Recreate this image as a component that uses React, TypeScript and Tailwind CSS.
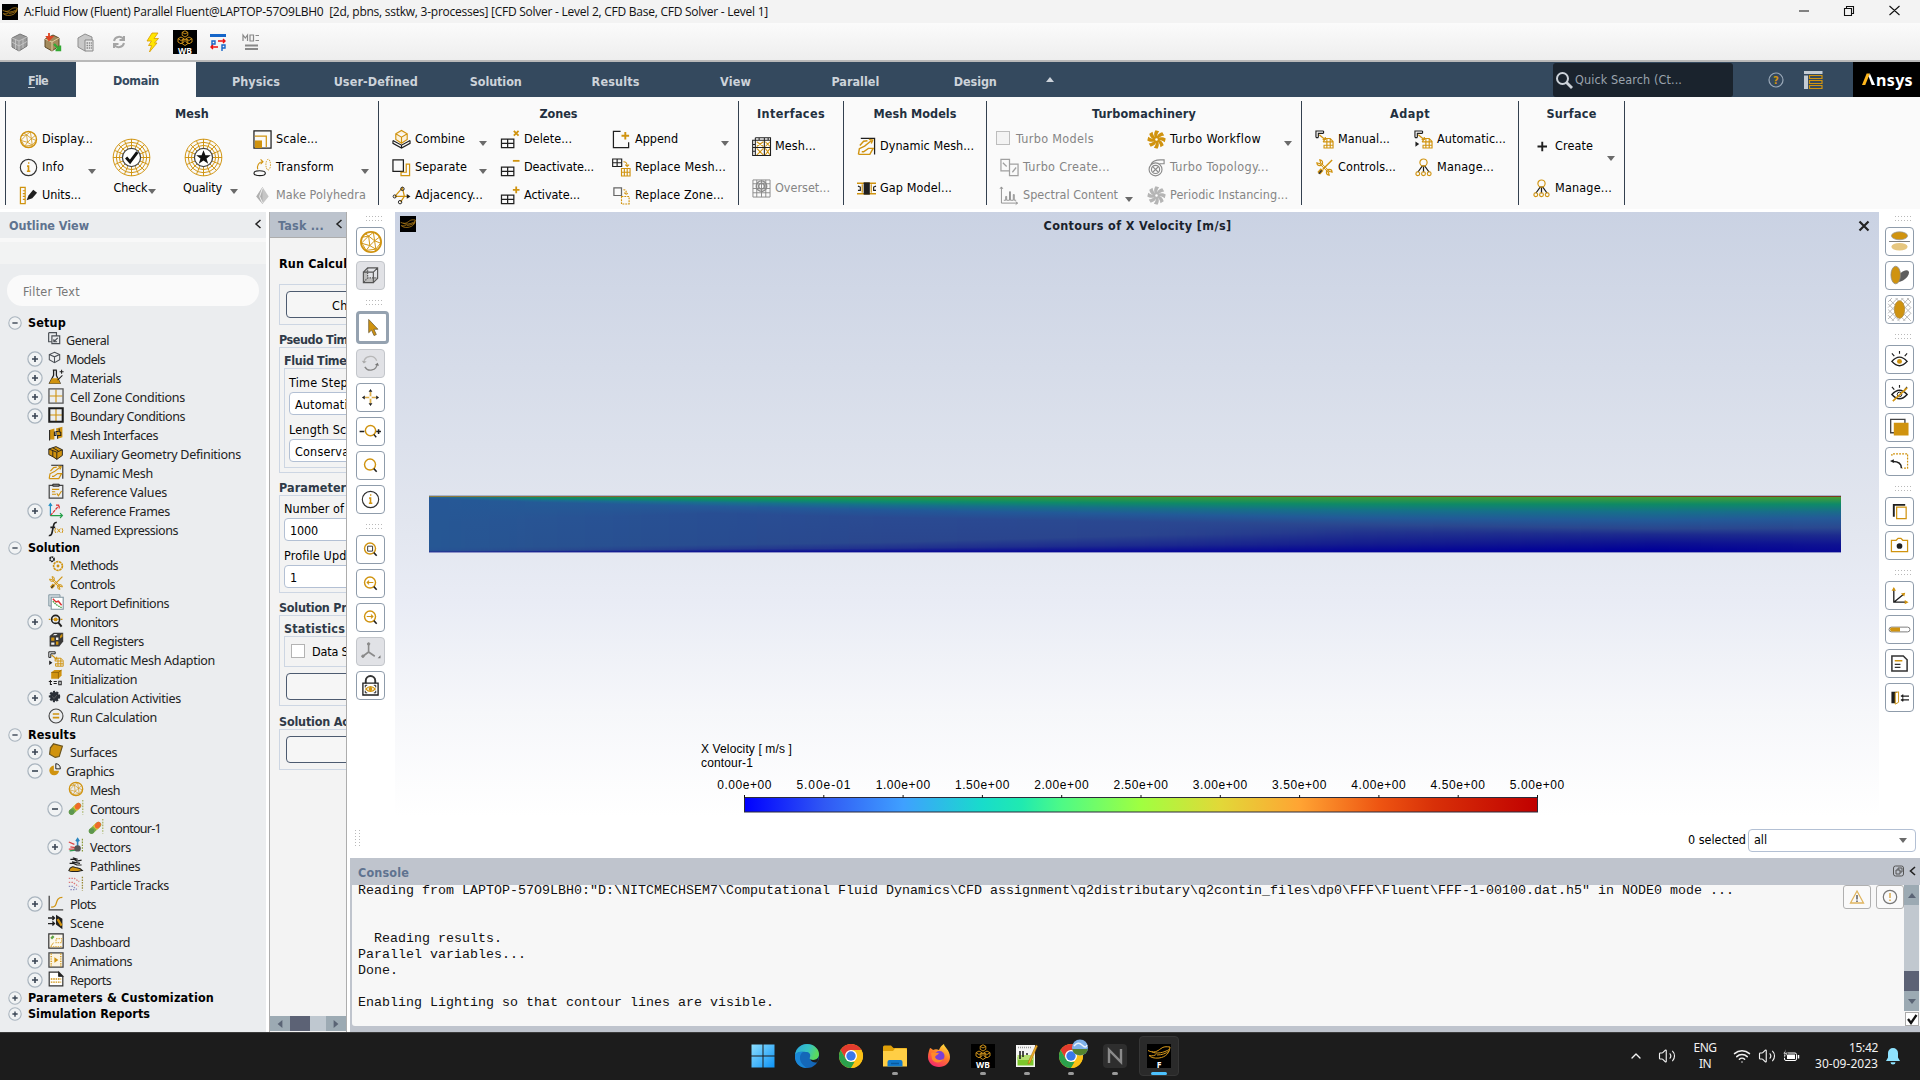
import React, { useLayoutEffect, useRef } from "react";
import { Wifi, Volume2, ChevronUp } from "lucide-react";

const G = "#d0930f";
const K = "#1f1f1f";
const M = "#8a8a8a";

/* Text whose tracking is adjusted so that it occupies a given width. */
function T({ w, c = "", children }: { w?: number; c?: string; children: React.ReactNode }) {
  const ref = useRef<HTMLSpanElement>(null);
  useLayoutEffect(() => {
    const el = ref.current;
    if (!el || !w) return;
    el.style.letterSpacing = "0px";
    const n = (el.textContent || "").length;
    const natural = el.getBoundingClientRect().width;
    el.style.letterSpacing = (w - natural) / n + "px";
  }, [w]);
  return (
    <span ref={ref} className={"inline-block shrink-0 whitespace-pre " + c}>
      {children}
    </span>
  );
}

const sphere = (
  <g fill="none" stroke={G}>
    <circle cx="10" cy="10" r="8.4" strokeWidth="1.5" />
    <path strokeWidth=".8" d="M3 6l5-1 4-3M8 5l5 4 4-3M2 11l6-6 1 8zM9 13l4-4 1 7zM9 13l-3 4M13 9l5 2-4 5M3 12l3 5 8-1M8 5L5 3M12 2l1 7" />
  </g>
);
const web = (center: React.ReactNode) => (
  <g>
    <g fill="none" stroke={G} strokeWidth="1">
      <circle cx="20" cy="20" r="18.8" />
      <circle cx="20" cy="20" r="15.6" />
      <circle cx="20" cy="20" r="12.4" />
      <path d="M20 1v38M1 20h38M6.6 6.6l26.8 26.8M33.4 6.6L6.6 33.4M12.7 2.6l14.6 34.8M27.3 2.6L12.7 37.4M2.6 12.7l34.8 14.6M2.6 27.3l34.8-14.6" />
    </g>
    <circle cx="20" cy="20" r="9.3" fill="#fff" stroke="#444" strokeWidth="1.3" />
    {center}
  </g>
);
const windowGrid = (
  <path d="M.5 9.5h13v9H.5zM7 9.5v9M.5 14h13" fill="none" stroke={K} strokeWidth="1.3" />
);
const fan = (f: string) => (
  <g fill={f}>
    {[0, 45, 90, 135, 180, 225, 270, 315].map((a) => (
      <path key={a} transform={`rotate(${a} 10 10)`} d="M9.5 10C7 7 7 3 9 .3l3.8 1C10.5 4 10.5 7 10.5 10z" />
    ))}
    <circle cx="10" cy="10" r="1.3" fill="#fff" />
  </g>
);
const lens = (inner?: React.ReactNode) => (
  <g>
    <circle cx="9.5" cy="9" r="5.8" fill="none" stroke={G} strokeWidth="1.5" />
    <path d="M13.5 13.3l3 3.2" stroke={K} strokeWidth="1.6" />
    {inner}
  </g>
);
const manage = (
  <g fill="none">
    <path d="M9 8L4 15M10 8v7M11 8l5 7" stroke={K} strokeWidth="1.3" />
    <g stroke={G} strokeWidth="1.2">
      <circle cx="10" cy="4.8" r="3.8" />
      <circle cx="4" cy="16.5" r="2" />
      <circle cx="10" cy="16.5" r="2" />
      <circle cx="16" cy="16.5" r="2" />
    </g>
  </g>
);
const adapt = (
  <g fill="none">
    <path d="M1 8V1h8M3.5 8V3.5H9M9 1v2.5M1 8h2.5" stroke={K} strokeWidth="1.2" />
    <path d="M4.5 5l6 5M8 10h2.8V7.3" stroke={G} strokeWidth="1.3" />
    <path d="M8.5 12.5L11 9h5l3 3v7h-9.5v-3M8.5 12.5h10M9 16h10M12.5 9v10M16 9v10" stroke={G} strokeWidth="1.2" />
  </g>
);
const tools = (
  <g fill="none" stroke={G}>
    <path d="M6 6l9 9" strokeWidth="2.4" />
    <path d="M6 6l9 9" strokeWidth=".9" stroke="#fff" />
    <path d="M18 2L8 12" strokeWidth="1.5" />
    <path d="M7.5 12L4 16" strokeWidth="4" />
    <path d="M7 13l-3 3.5" strokeWidth="1.5" stroke="#333" />
    <path d="M2 5a3 3 0 1 0 3-3L6 5 5 6zM18 15a3 3 0 1 0-3 3l-1-3 1-1z" strokeWidth="1.2" />
  </g>
);
const dyn = (
  <g fill="none">
    <path d="M4 1.5h14.5v17" stroke={K} strokeWidth="1.3" />
    <path d="M1.5 18.3l1-6L8 9.5l7-5.5M1.5 18.3h12l3.5-6.3h-5l-5 3.5H5M3 9l4-4.5 4-.5M12.5 2.5l4 .8-1.5 3.5" stroke={G} strokeWidth="1.5" />
  </g>
);
const contour = (
  <g>
    <path d="M4.500 15L13 7" stroke="#7fae45" strokeWidth="7" strokeLinecap="round" />
    <path d="M8.500 11.200L12 8" stroke="#e3cf3b" strokeWidth="7" />
    <path d="M11.500 8.500L13 7" stroke="#ee6a2b" strokeWidth="6.500" strokeLinecap="round" />
    <circle cx="4.500" cy="15" r="3.400" fill="#5d9650" />
    <path d="M18.5 0v18" stroke="#9aa84a" strokeWidth="1.3" strokeDasharray="2 1.5" />
  </g>
);

const icons: Record<string, React.ReactNode> = {
  sphere,
  info: (
    <g fill="none">
      <circle cx="10" cy="10" r="8.6" stroke="#333" strokeWidth="1.2" />
      <path d="M8.5 8.5H10V14M8.3 14h3.6M9.5 5.2h1.4" stroke={G} strokeWidth="1.7" />
    </g>
  ),
  units: (
    <g>
      <path d="M1.5 1.5h5v17h-5zM4 5h2.5M4 8h2.5M4 11h2.5M4 14h2.5" fill="none" stroke={G} strokeWidth="1.3" />
      <path d="M8 15l2-5 5-6 4 3-5 6z" fill={K} />
    </g>
  ),
  scale: (
    <g>
      <path d="M1 1h18v18H1z" fill="none" stroke={K} strokeWidth="1.3" />
      <path d="M2 6.5h12V18" fill="none" stroke={G} strokeWidth="1.3" />
      <path d="M2 11h7.5v8H2z" fill={G} />
    </g>
  ),
  transform: (
    <g fill="none">
      <ellipse cx="7" cy="16" rx="6" ry="2.6" stroke={K} strokeWidth="1.2" />
      <path d="M5 12C4 8 6 4 10 4M8 1.5L10.5 4 8 6.5" stroke={G} strokeWidth="1.2" />
      <ellipse cx="16" cy="7" rx="2.4" ry="5.6" stroke={G} strokeDasharray="1.5 1" />
    </g>
  ),
  poly: (
    <g>
      <path d="M10 1l6.500 10L10 19 3.500 11z" fill="#c6c6c6" />
      <path d="M10 1v18L3.500 11z" fill="#b0b0b0" />
      <path d="M10 2l-3 9 3 7" stroke="#f2f2f2" fill="none" />
    </g>
  ),
  combine: (
    <g fill="none">
      <path d="M1 11v3l9 5 9-5v-3M1 11l9 5 9-5M10 16v3" stroke={K} strokeWidth="1.2" />
      <path d="M4 4l6-3.500L16 4v6l-6 4-6-4zM4 4l6 3.500L16 4M10 7.500V14" fill="#fbf1dc" stroke={G} strokeWidth="1.2" />
    </g>
  ),
  separate: (
    <g fill="none">
      <path d="M1 2h11v12H1z" stroke={K} strokeWidth="1.3" />
      <path d="M15 6.500h3.500v12H9.500V15H15z" stroke={G} strokeWidth="1.3" />
    </g>
  ),
  adjacency: (
    <g fill="none">
      <path d="M3 11L11 2l2 9-4 6M3 11h15" stroke={G} strokeWidth="1.3" />
      <circle cx="11" cy="3" r="1.8" stroke={K} />
      <circle cx="8.5" cy="17" r="1.8" stroke={K} />
      <circle cx="2.8" cy="11" r="1.6" stroke={K} />
      <path d="M15.500 8.500l4 2.500-4 2.500z" fill={K} />
    </g>
  ),
  delete: (
    <g>
      {windowGrid}
      <path d="M13.500 1l5 5M18.500 1l-5 5" stroke={G} strokeWidth="1.9" />
    </g>
  ),
  deactivate: (
    <g>
      {windowGrid}
      <path d="M12.500 3h7" stroke={G} strokeWidth="1.9" />
    </g>
  ),
  activate: (
    <g>
      {windowGrid}
      <path d="M12.500 4h7M16 .5v7" stroke={G} strokeWidth="1.9" />
    </g>
  ),
  append: (
    <g fill="none">
      <path d="M9 1.500H1.500v17h16V13" stroke={K} strokeWidth="1.3" />
      <path d="M10 6h8M14 2v8" stroke={G} strokeWidth="2" />
    </g>
  ),
  replaceMesh: (
    <g fill="none">
      <path d="M.7 1h9.500v8H.7zM5.4 1v8M.7 5h9.500" stroke={K} strokeWidth="1.2" />
      <path d="M10 11h9v8h-9zM13 11v8M16 11v8M10 15h9M12 4c3 0 4 1 4 5M14 7l2 2 2-2" stroke={G} strokeWidth="1.2" />
    </g>
  ),
  replaceZone: (
    <g fill="none">
      <path d="M2 2h8v8H2z" stroke="#666" strokeWidth="1.3" />
      <path d="M10 11h8v8h-8zM12 4c3 0 3 1 3 5M13 7l2 2 2-2" stroke={G} strokeWidth="1.2" strokeDasharray="2 1" />
    </g>
  ),
  mesh: (
    <g fill="none">
      <path d="M5 5l7 5M12 5L5 10M14 5l5 5M19 5l-5 5M5 12l7 7M12 12l-7 7M14 12l5 7M19 12l-5 7" stroke={G} strokeWidth="1.1" />
      <path d="M.7 3.500h18.800v16H.7zM3.5.7h16v3M3.5.7v19M7.500.7v3M13 .7v19M17 .7v3M.7 8h3M.7 11h19M.7 15h3" stroke={K} strokeWidth="1.1" />
    </g>
  ),
  overset: (
    <g fill="none" stroke={M} strokeWidth="1">
      <path d="M1 1h18v18H1zM1 5h18M1 10h18M1 14.500h18M5 1v18M10 1v18M14.500 1v18" />
      <circle cx="10" cy="7.5" r="5.5" strokeWidth="1.5" />
      <circle cx="10" cy="7.5" r="3" strokeWidth="1.5" />
    </g>
  ),
  dyn,
  gap: (
    <g>
      <path d="M0 4.500h20M0 15.500h20" stroke={G} strokeWidth="1.5" />
      <path d="M7 3.500h6.500v13H7z" fill={K} />
      <path d="M5.500 5.500v9M15 5.500v9" stroke={G} strokeWidth="1.2" />
      <path d="M1 7.500l2.500 1V12H1M20 7.500l-2.500 1V12H20" fill="none" stroke={K} strokeWidth="1.2" />
    </g>
  ),
  turboCreate: (
    <path d="M1 1.500h9v12H1zM10 6.500h9v12h-9zM3 5l4 4M13 15l4-5" fill="none" stroke="#a0a0a0" strokeWidth="1.3" />
  ),
  spectral: (
    <path d="M1.500 1v17h17M0 3l1.500-2L3 3M16.500 16.500l2 1.500-2 1.500M4 15h2v-4h1v4h3V6h1v9h3V9h1v6h2" fill="none" stroke="#8f8f8f" strokeWidth="1" />
  ),
  fan: fan(G),
  fanGrey: fan("#b5b5b5"),
  topo: (
    <g fill="none" stroke={M} strokeWidth="1.2">
      <circle cx="9" cy="12" r="6.8" />
      <circle cx="9" cy="12" r="4.3" />
      <path d="M6 9l6 6M12 9l-6 6M4 7c2-4 6-5 10-5h4v4h-5" />
    </g>
  ),
  adapt,
  adaptAuto: (
    <g>
      {adapt}
      <path d="M1.5 12l4 2.800-4 2.800z" fill={K} />
    </g>
  ),
  tools,
  manage,
  plus: <path d="M5.800 10h10M10.800 5v10" stroke={K} strokeWidth="2" />,

  general: (
    <path d="M1 1h12v4M1 1v14h4M6 6h12v12H6zM9 15l6-6M9 11v4h5" fill="none" stroke="#4a4f55" strokeWidth="1.8" />
  ),
  models: <path d="M10 2l8 3.500v8L10 18l-8-4.500v-8zM2 5.500L10 9l8-3.500M10 9v9" fill="none" stroke="#4a4f55" strokeWidth="1.6" />,
  materials: (
    <g>
      <path d="M6 1.500h5M7 2v6L2 17.500h13L10.500 8V2" fill="none" stroke={K} strokeWidth="1.6" />
      <path d="M5 11.500h7.500l3 6.500H1.500z" fill={G} />
      <path d="M17 1v5M14.500 3.500h5M18 8l-6 6" stroke={K} strokeWidth="1.3" />
    </g>
  ),
  cellZone: (
    <g fill="none">
      <path d="M10 2v16M2 10h16" stroke={G} strokeWidth="1.4" />
      <path d="M1.200 1.200h17.600v17.600H1.200z" stroke="#555" strokeWidth="1.6" />
    </g>
  ),
  boundary: (
    <g fill="none">
      <path d="M10 2v16M2 10h16" stroke={G} strokeWidth="1.4" />
      <path d="M1.600 1.600h16.800v16.800H1.600z" stroke={K} strokeWidth="2.6" />
    </g>
  ),
  meshInt: (
    <g>
      <path d="M2 5l6-2v14H2zM10 3l8-2v13l-6 2z" fill={G} />
      <path d="M2 18V5M8 7v5h2V7h3M14 3v4l2 1v4h-4v4" fill="none" stroke={K} strokeWidth="1.3" />
    </g>
  ),
  aux: (
    <g>
      <path d="M1 5l9-3 8 4v7l-7 5-4-2-6-4z" fill={G} />
      <path d="M1 5l9-3 8 4v7l-7 5-4-3-6-3zM1 5l10 4 7-3M11 9v9M6 3.500l7 4M6 7v7" fill="none" stroke={K} strokeWidth="1.1" />
    </g>
  ),
  refVal: (
    <g fill="none">
      <path d="M1.500 3h17v16h-17z" stroke="#444" strokeWidth="1.5" />
      <path d="M6 4V1.500h8V4z" fill="#999" stroke={K} strokeWidth="1.2" />
      <path d="M5 8h9M5 11h4M5 14h5M11 13l2 3 4-6" stroke={G} strokeWidth="1.4" />
    </g>
  ),
  refFrame: (
    <g fill="none" strokeWidth="1.5">
      <path d="M3 17V2M1 5l2-3 2 3" stroke="#1f8fc4" />
      <path d="M3 17L14 4M10 4h4v4" stroke="#d33" strokeDasharray="4 1" />
      <path d="M3 17h15M15 14l3 3-3 3" stroke="#25a04a" />
    </g>
  ),
  fx: (
    <g>
      <path d="M1 18c3 1 4-2 5-8s2-9 5-8M3 8h6" fill="none" stroke={K} strokeWidth="2" />
      <path d="M9.500 9q-2 3 0 6M11.500 9.500l4 5M15.500 9.500l-4 5M17.500 9q2 3 0 6" fill="none" stroke={G} strokeWidth="1.2" />
    </g>
  ),
  methods: (
    <g fill="none">
      <circle cx="5" cy="4" r="2.6" stroke={K} strokeWidth="2.2" strokeDasharray="2 .6" />
      <circle cx="12.5" cy="12.5" r="5.5" stroke={G} strokeWidth="2" strokeDasharray="3 .8" />
      <circle cx="12.5" cy="12.5" r="1.8" fill={G} />
    </g>
  ),
  reportDef: (
    <g fill="none">
      <path d="M1 1h14v14H1z" fill="#d8e0e4" stroke="#7f95a0" strokeWidth="1.2" />
      <path d="M4 4h15v15H4z" fill="#fff" stroke="#7f95a0" strokeWidth="1.4" />
      <path d="M6 6l4 4 3-1 4 5" stroke="#d33" strokeWidth="1.8" />
      <path d="M6 9l4 4 3 2 4 2" stroke="#3a9a3a" strokeWidth="1.6" strokeDasharray="2 1" />
    </g>
  ),
  monitors: (
    <g fill="none">
      <path d="M1 8h18" stroke={G} strokeWidth="1.4" strokeDasharray="2 1" />
      <circle cx="9.5" cy="8" r="5" stroke={K} strokeWidth="2" />
      <circle cx="9.5" cy="8" r="2.4" fill={G} />
      <path d="M13 12l4 5" stroke={K} strokeWidth="2.4" />
    </g>
  ),
  cellReg: (
    <g>
      <path d="M2 5l5-4h12v11l-5 6H2z" fill="#3a3a3a" />
      <path d="M4 7h4v4H4zM10 12h3v4h-3zM15 5l3-3v4l-3 2z" fill={G} />
      <path d="M10 7h3v3h-3zM4 13h4v3H4zM8 2.500h4L10 4H6z" fill="#eee" />
    </g>
  ),
  init: (
    <g>
      <path d="M4 3l4-3h9v7l-4 4H4z" fill={G} />
      <path d="M4 3h9v8M13 3l4-3" fill="none" stroke="#7a5200" strokeWidth=".8" />
      <path d="M3 12.500v5.500h2M1 14.500h4M7 14.500h4M7 17h4M13.500 14h3v4.500h-3z" fill="none" stroke={K} strokeWidth="1.3" />
    </g>
  ),
  calcAct: (
    <g>
      <circle cx="10" cy="10" r="7" fill="#2b3038" stroke="#2b3038" strokeWidth="3.5" strokeDasharray="3 2" />
      <path d="M6.500 10l3 3 4-5" stroke="#777" fill="none" />
    </g>
  ),
  runCalc: (
    <g fill="none">
      <circle cx="10" cy="10" r="8.7" stroke="#444" strokeWidth="1.4" />
      <path d="M6 7.500h8M6 12h8" stroke={G} strokeWidth="2" />
    </g>
  ),
  surfaces: <path d="M7 1l11 3-4 13-5 1-7-4 1-8z" fill={G} stroke="#6b5520" strokeWidth="1.5" />,
  graphics: (
    <g>
      <path d="M9 4a7.500 7.500 0 1 0 8 8H9z" fill={G} />
      <path d="M12 1v8h7a8 8 0 0 0-7-8z" fill="none" stroke={K} strokeWidth="1.5" />
    </g>
  ),
  contour,
  vectors: (
    <g fill="none">
      <path d="M1 5l7 3M1 14h8M3 11l6 1" stroke="#d44" strokeWidth="1.6" />
      <path d="M12 12V2M10 4l2-3 2 3" stroke="#2b87c0" strokeWidth="2" />
      <path d="M2 16l8-1" stroke="#2f9a4f" strokeWidth="1.6" />
      <circle cx="12" cy="13" r="4" fill="#555" />
      <path d="M18 1v17" stroke="#8a9a38" strokeWidth="1.5" strokeDasharray="2 1.5" />
    </g>
  ),
  pathlines: (
    <g fill="none">
      <path d="M3 3h5l3 2 6-1M2 8h5l4 2h6M6 1l6 2M5 6l5 1 5 1" stroke={K} strokeWidth="1.5" />
      <path d="M1 17c2-6 6-5 8-4s6 0 9 4c-4 0-6 2-9 1-3 0-5 1-8-1z" fill={G} stroke={K} strokeWidth="1.3" />
    </g>
  ),
  particle: (
    <g fill="none" strokeWidth="1.6" strokeDasharray="1.8 1.5">
      <path d="M1 3h7l6 4M1 8h5l7 5" stroke="#d77" />
      <path d="M1 13h5l5 4M3 17h5" stroke="#88b" />
      <path d="M18 1v17" stroke="#9a8a38" />
    </g>
  ),
  plots: (
    <g fill="none">
      <path d="M1.500 1v17.500H19" stroke="#444" strokeWidth="1.6" />
      <path d="M4 15c10 1 3-12 14-12" stroke={G} strokeWidth="1.6" />
    </g>
  ),
  scene: (
    <g fill="none">
      <path d="M10 1l8 5v13l-8-6z" fill={K} />
      <path d="M12 6.500l5 8" stroke={G} strokeWidth="3" />
      <path d="M0 5h8M5.500 2.500L8 5 5.500 7.500M0 12h8M5.500 9.500L8 12l-2.500 2.500" stroke={K} strokeWidth="1.8" />
    </g>
  ),
  dashboard: (
    <g fill="none">
      <path d="M1 1h18v18H1z" fill="#fdf9ee" stroke="#333" strokeWidth="1.5" />
      <path d="M4 7l3-3" stroke="#5fa545" strokeWidth="3" />
      <path d="M3 17h14M10 7h7v5h-7z" stroke="#e3b75a" strokeWidth="1.5" strokeDasharray="2 1" />
      <path d="M4 16l3-4" stroke={G} />
    </g>
  ),
  anim: (
    <g fill="none">
      <path d="M1.200 1.200h17.600v17.600H1.200z" fill="#faf3e2" stroke="#444" strokeWidth="1.6" />
      <path d="M4 2v16M16 2v16" stroke={G} strokeWidth="1.6" strokeDasharray="1.5 1.5" />
      <path d="M8 6.500l5 3.500-5 3.500z" fill={G} />
    </g>
  ),
  reports: (
    <g fill="none">
      <path d="M1.500 1.500h12l5 5v12h-17zM13.500 1.500v5h5z" fill="#fff" stroke="#333" strokeWidth="1.5" />
      <path d="M13 1l6 6h-6z" fill="#222" />
      <path d="M3.500 10h13M3.500 14h13" stroke={G} strokeWidth="1.6" strokeDasharray="2 1" />
    </g>
  ),

  cube: (
    <g fill="none" stroke="#555" strokeWidth="1.2">
      <path d="M2.500 6.500v11h10l5-4.500H7V2z" fill="#bdbdbd" stroke="none" />
      <path d="M2.500 6.500v11h10.500V6.500zM2.500 6.500L7 2h10.500v11L13 17.500M13 6.500L17.500 2" />
      <path d="M7 2v10.500h10M3 17l4-4.500" strokeDasharray="1.5 1" />
    </g>
  ),
  cursor: <path d="M6 1.500v14l3-2.800 2.600 5.800 2.400-1.100-2.600-5.600h4.300z" fill={G} stroke="#6d5a33" strokeWidth=".8" />,
  rotate: (
    <g fill="none" strokeWidth="1.4">
      <path d="M3 9a7 7 0 0 1 13.500-2" stroke="#b8b8b8" />
      <path d="M17 10.500A7 7 0 0 1 4 13.500" stroke="#888" />
      <path d="M.8 7l2.200 3 3-2z" fill="#aaa" />
      <path d="M14.500 11.500l3-2.200 1.500 3z" fill="#777" />
    </g>
  ),
  pan: (
    <g fill="none">
      <path d="M10 4v12M4 10h12" stroke={G} strokeWidth="1.8" opacity=".75" />
      <path d="M10 1l2 3H8zM10 19l2-3H8zM1 10l3-2v4zM19 10l-3-2v4z" fill={K} />
      <path d="M8.700 8.700h2.600v2.600H8.700z" fill="#fff" />
    </g>
  ),
  zoomPM: (
    <g>
      <circle cx="10" cy="9" r="5.4" fill="none" stroke={G} strokeWidth="1.5" />
      <path d="M13.500 13l2.500 3" stroke={K} strokeWidth="1.5" />
      <path d="M-1.500 10h5M16 10h5M18.500 7.500v5" stroke={K} strokeWidth="1.6" />
    </g>
  ),
  zoom: lens(),
  zoomBox: lens(<path d="M7 6.500h5.200v5.200H7z" fill="none" stroke="#333" />),
  zoomL: lens(<path d="M13 9H6.500M8.500 7l-2 2 2 2" fill="none" stroke={G} strokeWidth="1.2" />),
  zoomR: lens(<path d="M6 9h6.500M10.500 7l2 2-2 2" fill="none" stroke={G} strokeWidth="1.2" />),
  axes: (
    <g fill="none" stroke="#8a8a8a">
      <path d="M8 2v8.500L2 15M8 10.500l6.500 4.500" strokeWidth="1.7" />
      <circle cx="8" cy="2" r="1.3" fill="#8a8a8a" />
      <circle cx="2" cy="15" r="1.3" fill="#8a8a8a" />
      <path d="M17.500 17h3v-3z" fill="#777" stroke="none" />
    </g>
  ),
  lock: (
    <g fill="none">
      <path d="M5 7.500V5a5 5 0 0 1 10 0v2.500" stroke="#333" strokeWidth="2" />
      <path d="M2 7.500h16V20H2z" stroke={K} strokeWidth="1.4" />
      <path d="M4.500 12v-2.200h2M15.500 12v-2.200h-2M4.500 15.500v2.200h2M15.500 15.500v2.200h-2" stroke={K} />
      <path d="M5 13.700q5-5 10 0-5 5-10 0z" stroke={G} strokeWidth="1.2" />
      <circle cx="10" cy="13.700" r="2" fill={G} />
    </g>
  ),
  mirror: (
    <g>
      <ellipse cx="10" cy="4" rx="8.5" ry="4.2" fill={G} stroke="#999" strokeWidth=".8" />
      <path d="M-1 10h22" stroke="#777" strokeWidth="1" />
      <ellipse cx="10" cy="15.5" rx="8.5" ry="4" fill="#e6c67f" />
    </g>
  ),
  shadow: (
    <g>
      <ellipse cx="13.5" cy="10.5" rx="4" ry="8" transform="rotate(48 13.5 10.5)" fill="#5d5d5d" />
      <ellipse cx="6" cy="9.5" rx="5" ry="9.3" fill={G} stroke="#8a8a8a" strokeWidth=".8" />
    </g>
  ),
  trans: (
    <g>
      <path
        d="M-2 2l4-4M-2 8L8-2M-2 14L14-2M-2 20L20-2M2 22L22 2M8 22L22 8M14 22l8-8M-2 16l6 6M-2 10l12 12M-2 4l18 18M0 0l22 22M6-2l16 16M12-2L22 8M18-2l4 4"
        stroke="#b5b5b5"
        strokeWidth="1"
      />
      <ellipse cx="10" cy="10" rx="5.3" ry="9.2" fill={G} stroke="#b5903f" />
    </g>
  ),
  eye: (
    <g fill="none">
      <path d="M2 12q8-9 16 0-8 9-16 0z" stroke={K} strokeWidth="1.5" />
      <circle cx="10" cy="12" r="2.6" fill={G} />
      <path d="M10 1v3M2 3.500l2.500 3M18 3.500l-2.500 3" stroke={K} strokeWidth="1.2" />
    </g>
  ),
  eyeOff: (
    <g fill="none">
      <path d="M2 11q8-9 16 0-8 9-16 0z" stroke={K} strokeWidth="1.5" />
      <circle cx="10" cy="11" r="2.4" stroke={K} />
      <path d="M10 1v3M2 3l2.500 3M18 3l-2.500 3" stroke={K} strokeWidth="1.2" />
      <path d="M3 18L18 4" stroke={G} strokeWidth="1.8" />
    </g>
  ),
  layers: (
    <g>
      <path d="M.7 1.500h15v14h-15z" fill="none" stroke="#444" strokeWidth="1.4" />
      <path d="M4 5h15.500v13.500H4z" fill={G} />
    </g>
  ),
  undoBox: (
    <g fill="none">
      <path d="M2 4V2h16.500v15H13" stroke={G} strokeWidth="1.3" strokeDasharray="2 1.2" />
      <path d="M12 17c0-5-4-7-9-7" stroke={K} strokeWidth="1.5" />
      <path d="M0 9.500l4-2v4z" fill={K} />
    </g>
  ),
  copy: (
    <g fill="none">
      <path d="M4 15.500V3h12" stroke={K} strokeWidth="2" />
      <path d="M7 5.500h10v12H7z" fill="#fff" stroke={G} strokeWidth="1.3" />
    </g>
  ),
  camera: (
    <g fill="none">
      <path d="M1.500 4.500h5l2-2h3l2 2h5v12h-17z" stroke={G} strokeWidth="1.3" />
      <circle cx="10" cy="10.5" r="3" fill={K} />
    </g>
  ),
  axes2: (
    <g fill="none">
      <path d="M4 3v14h13M4 17l10-8" stroke={K} strokeWidth="1.4" />
      <path d="M4 1l2.300 4H1.700zM19.500 17l-4-2.300v4.600zM16 7l-1 4-3.500-3z" fill={G} />
    </g>
  ),
  bar: (
    <g>
      <rect x="-1" y="7.5" width="22" height="5" rx="2.5" fill="#fff" stroke="#777" />
      <path d="M1 8h9.500v4H1q-2-2 0-4z" fill={G} />
    </g>
  ),
  textbox: (
    <g fill="none">
      <path d="M2 2h12l4 4v12H2z" stroke="#333" strokeWidth="1.6" />
      <path d="M5 7h8" stroke={G} strokeWidth="1.6" />
      <path d="M5 11h6M5 14h6" stroke="#333" strokeWidth="1.3" />
    </g>
  ),
  door: (
    <g fill="none">
      <path d="M1.500 4h6v12h-6z" fill={K} />
      <path d="M5.500 5l3.500-1v11l-3.500 2z" fill="#fff" stroke={G} />
      <path d="M12 8.500h8M14 7l-2 1.500L14 10M12 12.500h8M14 11l-2 1.500 2 1.500" stroke={K} strokeWidth="1.2" />
    </g>
  ),
};

function Ic({ n, c = "size-5" }: { n: string; c?: string }) {
  return (
    <svg viewBox="0 0 20 20" className={"shrink-0 overflow-visible " + c}>
      {icons[n]}
    </svg>
  );
}

const Arrow = ({ c = "" }: { c?: string }) => (
  <svg viewBox="0 0 8 5" className={"h-[5px] w-2 shrink-0 " + c}>
    <path d="M0 0h8L4 5z" fill="#6a6a6a" />
  </svg>
);

/* ---------- Ribbon ---------- */
function Item({ n, t, w, h = "h-7", grey, arrow }: { n: string; t: string; w: number; h?: string; grey?: boolean; arrow?: boolean }) {
  return (
    <div className={"flex items-center " + h + (grey ? " text-[#858585]" : " text-black")}>
      <span className="-ml-px mr-1 flex w-5 justify-center">
        <Ic n={n} c="size-[19px]" />
      </span>
      <T w={w}>{t}</T>
      {arrow && <Arrow c="mt-2 ml-auto" />}
    </div>
  );
}
function Group({ title, tw, c, children }: { title: string; tw: number; c: string; children: React.ReactNode }) {
  return (
    <section className={"h-[104px] shrink-0 border-l border-[#33404f] " + c}>
      <h2 className="flex h-6 items-center justify-center pt-0.5 font-bold text-[#23303f]">
        <T w={tw}>{title}</T>
      </h2>
      <div className="flex">{children}</div>
    </section>
  );
}
function BigBtn({ label, w, c, lc, children }: { label: string; w: number; c: string; lc: string; children: React.ReactNode }) {
  return (
    <div className={"flex shrink-0 flex-col items-center pt-[13px] " + c}>
      <svg viewBox="0 0 40 40" className="size-[39px]">
        {web(children)}
      </svg>
      <div className={"mt-[3px] flex items-center text-black " + lc}>
        <T w={w}>{label}</T>
        <Arrow c="mt-1.5" />
      </div>
    </div>
  );
}

function Ribbon() {
  return (
    <div className="flex h-28 bg-[#fafafa] pt-1 pl-[5px]">
      <Group title="Mesh" tw={34} c="w-[373px]">
        <div className="w-[92px] shrink-0 pr-0.5 pl-[13px]">
          <Item n="sphere" t="Display..." w={51} />
          <Item n="info" t="Info" w={22} arrow />
          <Item n="units" t="Units..." w={39} />
        </div>
        <BigBtn label="Check" w={34} c="w-[66px]" lc="ml-[7px]">
          <path d="M14.500 20l4 4.500L26 14.500" fill="none" stroke="#111" strokeWidth="3" />
        </BigBtn>
        <BigBtn label="Quality" w={39} c="w-[78px]" lc="ml-[15px] gap-2">
          <path d="M20 12.500l2 5.300h5.500l-4.400 3.300 1.700 5.400-4.800-3.300-4.800 3.300 1.700-5.400-4.400-3.300H18z" fill="#111" />
        </BigBtn>
        <div className="w-[136px] shrink-0 pr-[9px] pl-[11px]">
          <Item n="scale" t="Scale..." w={42} />
          <Item n="transform" t="Transform" w={58} arrow />
          <Item n="poly" t="Make Polyhedra" w={90} grey />
        </div>
      </Group>
      <Group title="Zones" tw={38} c="w-[360px]">
        <div className="w-[111px] pr-[3px] pl-[13px]">
          <Item n="combine" t="Combine" w={50} arrow />
          <Item n="separate" t="Separate" w={52} arrow />
          <Item n="adjacency" t="Adjacency..." w={68} />
        </div>
        <div className="w-[112px] pl-[11px]">
          <Item n="delete" t="Delete..." w={48} />
          <Item n="deactivate" t="Deactivate..." w={70} />
          <Item n="activate" t="Activate..." w={56} />
        </div>
        <div className="w-[136px] pr-[9px] pl-[10px]">
          <Item n="append" t="Append" w={43} arrow />
          <Item n="replaceMesh" t="Replace Mesh..." w={91} />
          <Item n="replaceZone" t="Replace Zone..." w={89} />
        </div>
      </Group>
      <Group title="Interfaces" tw={68} c="w-[105px]">
        <div className="pl-[13px]">
          <Item n="mesh" t="Mesh..." w={41} h="h-[42px]" />
          <Item n="overset" t="Overset..." w={55} h="h-[42px]" grey />
        </div>
      </Group>
      <Group title="Mesh Models" tw={83} c="w-[143px]">
        <div className="pl-[13px]">
          <Item n="dyn" t="Dynamic Mesh..." w={94} h="h-[42px]" />
          <Item n="gap" t="Gap Model..." w={72} h="h-[42px]" />
        </div>
      </Group>
      <Group title="Turbomachinery" tw={104} c="w-[315px]">
        <div className="w-[149px] pr-[3px] pl-[13px]">
          <div className="-ml-1 flex h-7 items-center gap-1.5 text-[#858585]">
            <span className="mb-0.5 size-3.5 border border-[#bdbdbd] bg-[#f3f3f3]" />
            <T w={78}>Turbo Models</T>
          </div>
          <Item n="turboCreate" t="Turbo Create..." w={87} grey />
          <Item n="spectral" t="Spectral Content" w={95} grey arrow />
        </div>
        <div className="w-[165px] pr-[9px] pl-[11px]">
          <Item n="fan" t="Turbo Workflow" w={91} arrow />
          <Item n="topo" t="Turbo Topology..." w={99} grey />
          <Item n="fanGrey" t="Periodic Instancing..." w={118} grey />
        </div>
      </Group>
      <Group title="Adapt" tw={40} c="w-[217px]">
        <div className="w-[100px] pl-[13px]">
          <Item n="adapt" t="Manual..." w={52} />
          <Item n="tools" t="Controls..." w={58} />
        </div>
        <div className="pl-3">
          <Item n="adaptAuto" t="Automatic..." w={69} />
          <Item n="manage" t="Manage..." w={57} />
        </div>
      </Group>
      <Group title="Surface" tw={50} c="w-[107px] border-r">
        <div className="w-full pr-[9px] pl-[13px]">
          <div className="flex items-center">
            <Item n="plus" t="Create" w={38} h="h-[42px]" />
            <Arrow c="mt-6 ml-auto" />
          </div>
          <Item n="manage" t="Manage..." w={57} h="h-[42px]" />
        </div>
      </Group>
    </div>
  );
}

/* ---------- Top bars ---------- */
const Feather = ({ c, letter }: { c: string; letter?: string }) => (
  <svg viewBox="0 0 24 24" className={"shrink-0 bg-black " + c}>
    <g fill="none" stroke="#d99a1c" strokeWidth="1" transform={letter ? "translate(0 -3)" : ""}>
      <path d="M1 9.500c6 3 9 1 13-2 2.500-2 5-2 9-1.500-.500 6-4 10-11 11-5 .500-8-.500-10-2.500M2 14.500c4 .800 6 0 7.500-1.500M5 10.800c4 2.500 12 1 17.500-2.500M10 14c5 0 9-1.500 12-4" />
    </g>
    {letter && (
      <text x="12" y="23.5" fontSize="8.5" fontWeight="bold" fill="#fff" textAnchor="middle" fontFamily="Noto Sans, sans-serif">
        {letter}
      </text>
    )}
  </svg>
);
const WB = ({ c }: { c: string }) => (
  <svg viewBox="0 0 24 24" className={"shrink-0 bg-black " + c}>
    <path
      d="M12 .8l2.800 1.500v3L12 7 9.200 5.300v-3zM8 7l3 1.700v3.300L8 13.800 5 12V8.700zM16 7l3 1.700v3.300l-3 1.800L13 12V8.700zM12 9l2.800 1.700v3L12 15.500l-2.800-1.800v-3zM9.200 2.300L12 4l2.800-1.700M5 8.700l3 1.800 3-1.800M13 8.700l3 1.800 3-1.800"
      fill="none"
      stroke="#d99a1c"
      strokeWidth=".9"
    />
    <text x="12" y="23.5" fontSize="8.5" fontWeight="bold" fill="#fff" textAnchor="middle" fontFamily="Noto Sans, sans-serif">
      WB
    </text>
  </svg>
);

const tabs: [string, number][] = [
  ["Physics", 48],
  ["User-Defined", 84],
  ["Solution", 52],
  ["Results", 48],
  ["View", 31],
  ["Parallel", 48],
  ["Design", 43],
];

function TopBars() {
  return (
    <>
      <div className="flex h-[23px] items-center bg-[#f3f3f3] pl-[2px]">
        <Feather c="size-4" />
        <T w={744} c="ml-1.5 font-['Open_Sans','Noto_Sans',sans-serif] text-[12px] text-[#111]">
          {"A:Fluid Flow (Fluent) Parallel Fluent@LAPTOP-57O9LBH0  [2d, pbns, sstkw, 3-processes] [CFD Solver - Level 2, CFD Base, CFD Solver - Level 1]"}
        </T>
        <svg viewBox="0 0 110 14" className="mr-5 mb-1 ml-auto h-3.5 w-[110px]" fill="none" stroke="#111">
          <path d="M9 8h10M54.500 5.500h7v7h-7zM56.500 5.500v-2h7v7h-2M99.500 3l10 9M109.500 3l-10 9" strokeWidth="1.1" />
        </svg>
      </div>
      <div className="flex h-[39px] items-center gap-[9px] border-b-2 border-[#b9b9b9] bg-gradient-to-b from-[#fbfbfb] to-[#eeeeee] pl-[7px]">
        <svg viewBox="0 0 24 24" className="size-6">
          <path d="M5 8l8-4 7 3v9l-8 5-7-4z" fill="#9a9a9a" stroke="#777" />
          <path d="M5 8l7 3 8-4M12 11v10M8.500 9.500v9.500M16 9v9M5 12l7 4 8-4.500" stroke="#ccc" strokeWidth=".8" fill="none" />
        </svg>
        <svg viewBox="0 0 24 24" className="size-6">
          <path d="M5 9l8-4 6 3v8l-7 5-7-4z" fill="#a38a5c" stroke="#5e4a28" />
          <path d="M5 9l7 3 7-4M12 12v9" stroke="#e0cf9f" fill="none" />
          <path d="M9 3v5M7 7l2 3 3-3z" fill="#d42" stroke="#d42" strokeWidth="1.8" />
          <path d="M14 14l5.500 5.500M20 15.500v4.500h-4.500" stroke="#3a3" strokeWidth="2.4" fill="none" />
        </svg>
        <svg viewBox="0 0 24 24" className="ml-px size-6">
          <path d="M4 8l7-4 7 3v9l-7 5-7-4z" fill="#c8c8c8" stroke="#8f8f8f" />
          <path d="M11 10h8v11h-8z" fill="#e6e6e6" stroke="#888" />
          <path d="M12.500 13h5.500M12.500 15.500h5.500M12.500 18h5.500" stroke="#888" strokeDasharray="1.5 .8" strokeWidth="1.5" />
        </svg>
        <svg viewBox="0 0 24 24" className="size-6" fill="none" stroke="#a5a5a5" strokeWidth="2">
          <path d="M7 11c1-4.500 7-5.500 9.500-2M17 6v4h-4.500M17 13c-1 4.500-7 5.500-9.500 2M7 18v-4h4.500" />
        </svg>
        <svg viewBox="0 0 24 24" className="size-6">
          <path d="M12 3h6l-4 5.500h4.500L14.500 13H17L9.500 22l2-6.500H8.500l3-4.500H7z" fill="#ffe600" stroke="#d99a00" strokeWidth=".8" />
        </svg>
        <WB c="size-6" />
        <svg viewBox="0 0 24 24" className="size-6">
          <path d="M4 4h16v3H4z" fill="#1565c8" />
          <path d="M6 18v-7h3v3H6M16 21v-6h3v3h-3" fill="none" stroke="#1565c8" strokeWidth="1.4" />
          <path d="M12 11h7M17 9l2 2-2 2M12 17H5M7 15l-2 2 2 2" fill="none" stroke="#e11" strokeWidth="1.4" />
        </svg>
        <svg viewBox="0 0 24 24" className="size-6" fill="none" stroke="#888" strokeWidth="1.2">
          <path d="M4 11V5l2.300 3L8.500 5v6M11 5h3.500v6H11zM16.500 5.500h3.500M16.500 10.500h3.500" />
          <path d="M6 15.500h13M6 19h13" strokeWidth="2" />
        </svg>
      </div>
      <nav className="flex h-[35px] items-center bg-[#34495e] font-bold text-[#cdd3da]">
        <div className="flex w-[76px] justify-center pt-0.5">
          <T w={20}>
            <u className="underline-offset-2">F</u>ile
          </T>
        </div>
        <div className="flex h-full w-[120px] items-center justify-center bg-[#fafafa] pt-0.5 text-[#34495e]">
          <T w={46}>Domain</T>
        </div>
        {tabs.map(([t, w]) => (
          <div key={t} className="flex w-[119.9px] justify-center pt-1">
            <T w={w}>{t}</T>
          </div>
        ))}
        <svg viewBox="0 0 8 5" className="ml-[11px] h-[5px] w-2">
          <path d="M0 5h8L4 0z" fill="#cdd3da" />
        </svg>
        <div className="ml-auto flex h-[34px] w-[180px] items-center gap-0.5 rounded-[3px] bg-[#1a232d] pl-0.5 font-normal text-[#9aa3ad]">
          <svg viewBox="0 0 18 18" className="size-[18px]" fill="none" stroke="#cdd3da">
            <circle cx="7.5" cy="7.5" r="5.5" strokeWidth="2" />
            <path d="M11.500 11.500l5.500 5.500" strokeWidth="2.8" />
          </svg>
          <T w={107}>Quick Search (Ct...</T>
        </div>
        <svg viewBox="0 0 16 16" className="ml-[35px] size-4">
          <circle cx="8" cy="8" r="7" fill="none" stroke="#9aa9b8" strokeWidth="1.2" />
          <text x="8" y="11.5" fontSize="10" fill={G} textAnchor="middle" fontFamily="DejaVu Sans">?</text>
        </svg>
        <svg viewBox="0 0 19 18" className="ml-5 h-[18px] w-[19px]">
          <path d="M0 0h18.500v3H0zM0 4.500h4V18H0z" fill="#c3cbd4" />
          <path d="M5.500 4.500h12.500v3H5.500zM5.500 9.500h12.500v3H5.500zM5.500 14.500h12.500v3H5.500z" fill="none" stroke={G} strokeWidth="1.2" />
        </svg>
        <div className="ml-[30px] flex h-full w-[67px] items-center bg-black pl-2 font-['Noto_Sans',sans-serif] text-[16px] text-white">
          <svg viewBox="0 0 14 14" className="h-[13px] w-[15px]">
            <path d="M0 13L5 .5h3.500L3.500 13z" fill="#ffb71b" />
            <path d="M7.200 3.800L8.500.5 14 13h-3.500z" fill="#fff" />
          </svg>
          <T w={37}>nsys</T>
        </div>
      </nav>
    </>
  );
}

/* ---------- Outline tree ---------- */
type Row = [level: number, sign: string, icon: string, label: string, w: number];
const rows: Row[] = [
  [0, "-", "", "Setup", 38],
  [1, "", "general", "General", 43],
  [1, "+", "models", "Models", 39],
  [1, "+", "materials", "Materials", 51],
  [1, "+", "cellZone", "Cell Zone Conditions", 115],
  [1, "+", "boundary", "Boundary Conditions", 115],
  [1, "", "meshInt", "Mesh Interfaces", 88],
  [1, "", "aux", "Auxiliary Geometry Definitions", 171],
  [1, "", "dyn", "Dynamic Mesh", 83],
  [1, "", "refVal", "Reference Values", 97],
  [1, "+", "refFrame", "Reference Frames", 100],
  [1, "", "fx", "Named Expressions", 108],
  [0, "-", "", "Solution", 52],
  [1, "", "methods", "Methods", 48],
  [1, "", "tools", "Controls", 45],
  [1, "", "reportDef", "Report Definitions", 99],
  [1, "+", "monitors", "Monitors", 48],
  [1, "", "cellReg", "Cell Registers", 74],
  [1, "", "adaptAuto", "Automatic Mesh Adaption", 145],
  [1, "", "init", "Initialization", 67],
  [1, "+", "calcAct", "Calculation Activities", 115],
  [1, "", "runCalc", "Run Calculation", 87],
  [0, "-", "", "Results", 48],
  [1, "+", "surfaces", "Surfaces", 47],
  [1, "-", "graphics", "Graphics", 48],
  [2, "", "sphere", "Mesh", 30],
  [2, "-", "contour", "Contours", 49],
  [3, "", "contour", "contour-1", 51],
  [2, "+", "vectors", "Vectors", 41],
  [2, "", "pathlines", "Pathlines", 50],
  [2, "", "particle", "Particle Tracks", 79],
  [1, "+", "plots", "Plots", 26],
  [1, "", "scene", "Scene", 34],
  [1, "", "dashboard", "Dashboard", 60],
  [1, "+", "anim", "Animations", 62],
  [1, "+", "reports", "Reports", 41],
  [0, "+", "", "Parameters & Customization", 186],
  [0, "+", "", "Simulation Reports", 122],
];
const small = ["general", "models", "calcAct", "graphics"];
const pad = ["pl-2", "pl-[27px]", "pl-[47px]", "pl-[67px]"];

function Expander({ sign, big }: { sign: string; big: boolean }) {
  return (
    <svg viewBox="0 0 16 16" className={"shrink-0 " + (big ? "mb-0.5 size-4" : "size-3.5")}>
      {sign && (
        <>
          <circle cx="8" cy="8" r="7.1" fill="#f1f3f4" stroke="#a9b4be" strokeWidth="1.2" />
          <path d={sign === "+" ? "M5 8h6M8 5v6" : "M5 8h6"} stroke="#3b4654" strokeWidth="1.6" />
        </>
      )}
    </svg>
  );
}

function Outline() {
  return (
    <aside className="flex w-[266px] shrink-0 flex-col bg-[#ebedef]">
      <div className="flex h-[26px] items-center justify-between pt-0.5 pr-1 pl-[9px] font-bold text-[#5f7390]">
        <T w={80}>Outline View</T>
        <svg viewBox="0 0 8 10" className="mb-1 h-2.5 w-2" fill="none" stroke="#222" strokeWidth="1.5">
          <path d="M6.500 1L2 5l4.500 4" />
        </svg>
      </div>
      <div className="h-1 bg-[#f8f8f8]" />
      <div className="h-[22px] bg-[#f2f3f3]" />
      <div className="mt-[11px] ml-[7px] flex h-[31px] w-[252px] items-center rounded-full bg-[#fafafa] pt-0.5 pl-4 text-[#777]">
        <T w={57}>Filter Text</T>
      </div>
      <div className="mt-[9px] font-['Noto_Sans',sans-serif] text-[12.5px] text-[#222]">
        {rows.map(([lv, sign, icon, label, w], i) =>
          lv === 0 ? (
            <div key={i} className="flex h-4 items-center gap-1.5 pl-2 font-['DejaVu_Sans_Condensed','DejaVu_Sans',sans-serif] text-[12.5px] font-bold text-black">
              <Expander sign={sign} big={false} />
              <T w={w}>{label}</T>
            </div>
          ) : (
            <div key={i} className={"flex h-[19px] items-center " + pad[lv]}>
              <Expander sign={sign} big />
              {small.includes(icon) ? (
                <Ic n={icon} c="mr-[5px] mb-1 ml-[5px] size-[13px]" />
              ) : (
                <Ic n={icon} c="mr-1.5 mb-[3px] ml-[5px] size-4" />
              )}
              <T w={w}>{label}</T>
            </div>
          )
        )}
      </div>
    </aside>
  );
}

/* ---------- Task page ---------- */
const Head = ({ children, c = "", w }: { children: string; c?: string; w: number }) => (
  <div className={"flex items-center font-bold text-[#2f3a48] " + c}>
    <T w={w}>{children}</T>
  </div>
);
const Field = ({ t, w }: { t: string; w: number }) => (
  <div className="flex h-[23px] w-40 items-center rounded-[4px] border border-[#b3c0d4] bg-white pt-0.5 pl-[5px] text-black">
    <T w={w}>{t}</T>
  </div>
);
const box = "w-40 border border-[#cdd6e3]";
const btn = "w-40 h-[27px] rounded-[4px] border border-[#4d5b70] bg-[#f6f6f6]";

function TaskPage() {
  return (
    <section className="ml-[3px] flex w-[78px] shrink-0 flex-col overflow-hidden border-x border-[#adadad] bg-[#f3f3f3]">
      <div className="flex h-[26px] shrink-0 items-center justify-between border-b border-[#adadad] bg-[#bcc3cd] pt-0.5 pr-[3px] pl-2 font-bold text-[#5f7390]">
        <T w={46}>Task ...</T>
        <svg viewBox="0 0 8 10" className="mb-1 h-2.5 w-2" fill="none" stroke="#222" strokeWidth="1.5">
          <path d="M6.500 1L2 5l4.500 4" />
        </svg>
      </div>
      <div className="h-[778px] shrink-0 overflow-hidden pl-[9px] text-black">
        <div className="flex h-[46px] items-center pt-1.5 font-bold">
          <T w={76}>Run Calcula</T>
        </div>
        <div className={box + " h-[41px] pt-1.5 pl-1.5"}>
          <div className={btn + " flex items-center pt-0.5 pl-[45px]"}>
            <T w={36}>Check</T>
          </div>
        </div>
        <Head c="h-[22px] pt-2" w={76}>Pseudo Time</Head>
        <div className={box + " h-[126px] pl-1"}>
          <Head c="h-5 pt-1.5" w={66}>Fluid Time </Head>
          <div className={box + " h-[100px] pt-[5px] pl-1"}>
            <div className="flex h-[18px] items-center">
              <T w={59}>Time Step</T>
            </div>
            <Field t="Automatic" w={59} />
            <div className="flex h-6 items-center pt-1.5">
              <T w={75}>Length Scale</T>
            </div>
            <Field t="Conservative" w={76} />
          </div>
        </div>
        <Head c="h-[22px] pt-2" w={74}>Parameters</Head>
        <div className={box + " h-[98px] pl-1"}>
          <div className="flex h-[22px] items-center pt-1">
            <T w={60}>Number of</T>
          </div>
          <Field t="1000" w={28} />
          <div className="flex h-6 items-center pt-1.5">
            <T w={74}>Profile Updat</T>
          </div>
          <Field t="1" w={7} />
        </div>
        <Head c="h-[22px] pt-2" w={75}>Solution Pro</Head>
        <div className={box + " h-[91px] pl-1"}>
          <Head c="h-5 pt-1.5" w={61}>Statistics</Head>
          <div className={box + " flex h-[31px] items-center gap-[7px] pl-1.5"}>
            <span className="mb-0.5 size-3.5 shrink-0 border border-[#b3b3b3] bg-white" />
            <T w={81}>Data Sampling</T>
          </div>
          <div className={btn + " mt-1.5 ml-0.5"} />
        </div>
        <Head c="h-[23px] pt-2" w={75}>Solution Act</Head>
        <div className={box + " h-[41px] pt-1.5 pl-1.5"}>
          <div className={btn} />
        </div>
      </div>
      <div className="flex h-[15px] shrink-0 bg-[#bfc8d0]">
        <div className="flex w-5 items-center justify-center bg-[#9caab3]">
          <svg viewBox="0 0 6 10" className="h-2 w-1.5"><path d="M6 0v10L0 5z" fill="#5a6475" /></svg>
        </div>
        <div className="w-5 bg-[#5c6275]" />
        <div className="ml-auto flex w-5 items-center justify-center bg-[#9caab3]">
          <svg viewBox="0 0 6 10" className="h-2 w-1.5"><path d="M0 0v10l6-5z" fill="#5a6475" /></svg>
        </div>
      </div>
    </section>
  );
}

/* ---------- Tool strips ---------- */
const Dots = ({ c }: { c: string }) => (
  <div className={"flex w-[29px] shrink-0 items-center justify-center pl-[7px] " + c}>
    <svg viewBox="0 0 17 5" className="h-[5px] w-[17px]" stroke="#b9b9b9" strokeDasharray="1 2">
      <path d="M0 .5h17M0 4.500h17" />
    </svg>
  </div>
);
function Strip({ names, c }: { names: string[]; c: string }) {
  return (
    <div className={"flex flex-col gap-[5px] " + c}>
      {names.map((n, i) => {
        if (n === "") return <Dots key={i} c={i === 0 ? "h-[10px] pt-[3px]" : "h-[11px] pt-[3px]"} />;
        const sel = n === "cursor";
        const grey = n === "cube" || n === "rotate" || n === "axes";
        return (
          <div
            key={i}
            className={
              "flex shrink-0 items-center justify-center overflow-hidden rounded-[4px] " +
              (sel
                ? "size-[33px] border-3 border-[#95a2b0] bg-white"
                : grey
                ? "size-[29px] border border-[#c3c6cb] bg-[#e1e2e6]"
                : "size-[29px] border border-[#8f9cab] bg-white")
            }
          >
            <Ic n={n} c={n === "sphere" ? "size-6" : "size-[19px]"} />
          </div>
        );
      })}
    </div>
  );
}

/* ---------- Contour plot ---------- */
type Stop = [number, number, number, number];
const keys: { s: number; st: Stop[] }[] = [
  { s: 0, st: [[0, 38, 100, 150], [0.01, 38, 95, 150], [0.02, 38, 90, 150], [0.04, 38, 87, 150], [0.5, 38, 87, 148], [0.9, 38, 87, 148], [0.97, 38, 84, 148], [1, 36, 50, 145]] },
  { s: 0.08, st: [[0, 24, 145, 80], [0.03, 14, 132, 115], [0.06, 26, 108, 145], [0.1, 36, 90, 150], [0.4, 40, 84, 148], [0.9, 40, 82, 145], [0.97, 40, 74, 142], [1, 18, 22, 145]] },
  { s: 0.2, st: [[0, 34, 150, 66], [0.05, 12, 140, 105], [0.1, 24, 112, 142], [0.17, 36, 90, 152], [0.3, 40, 78, 147], [0.87, 40, 76, 144], [0.95, 36, 58, 142], [1, 10, 12, 147]] },
  { s: 0.33, st: [[0, 44, 153, 58], [0.08, 14, 140, 108], [0.15, 22, 112, 138], [0.24, 34, 88, 152], [0.38, 42, 74, 146], [0.82, 42, 70, 142], [0.93, 32, 48, 142], [1, 8, 8, 148]] },
  { s: 0.5, st: [[0, 56, 155, 54], [0.11, 14, 138, 103], [0.2, 22, 112, 135], [0.31, 34, 90, 152], [0.45, 42, 72, 145], [0.7, 42, 68, 142], [0.88, 28, 42, 142], [1, 7, 7, 150]] },
  { s: 0.66, st: [[0, 62, 157, 52], [0.13, 14, 138, 103], [0.25, 22, 112, 138], [0.38, 34, 90, 152], [0.5, 42, 72, 144], [0.64, 34, 52, 142], [0.85, 20, 28, 142], [1, 3, 3, 151]] },
  { s: 0.87, st: [[0, 68, 158, 52], [0.13, 14, 138, 100], [0.27, 22, 112, 138], [0.42, 34, 90, 152], [0.58, 42, 70, 142], [0.68, 28, 42, 142], [0.84, 12, 16, 146], [0.97, 0, 0, 152]] },
  { s: 1, st: [[0, 70, 158, 52], [0.13, 14, 138, 105], [0.27, 26, 108, 138], [0.38, 36, 90, 152], [0.56, 42, 72, 144], [0.7, 28, 42, 142], [0.87, 14, 18, 146], [1, 8, 8, 148]] },
];
const N = 353;
const columns = Array.from({ length: N }, (_, i) => {
  const s = i / (N - 1);
  let k = 0;
  while (k < keys.length - 2 && s > keys[k + 1].s) k++;
  const a = keys[k];
  const b = keys[k + 1];
  const f = (s - a.s) / (b.s - a.s);
  return a.st.map((p, j) => p.map((v, q) => v + (b.st[j][q] - v) * f) as Stop);
});

function ContourPlot() {
  return (
    <svg viewBox="0 0 1412 58" className="ml-[34px] block h-[58px] w-[1412px]" shapeRendering="crispEdges">
      <defs>
        {columns.map((c, i) => (
          <linearGradient key={i} id={"c" + i} x1="0" y1="0" x2="0" y2="1">
            {c.map((p, j) => (
              <stop key={j} offset={p[0]} stopColor={`rgb(${Math.round(p[1])},${Math.round(p[2])},${Math.round(p[3])})`} />
            ))}
          </linearGradient>
        ))}
        <linearGradient id="wall">
          <stop offset="0" stopColor="#8d7c3e" />
          <stop offset=".2" stopColor="#7c5530" />
          <stop offset="1" stopColor="#7c3a1c" />
        </linearGradient>
      </defs>
      {columns.map((_, i) => (
        <rect key={i} x={i * 4} y="2" width="4" height="55" fill={`url(#c${i})`} />
      ))}
      <rect x="0" y="0" width="1412" height="1" fill="#a9b4cc" />
      <rect x="0" y="1" width="1412" height="1" fill="url(#wall)" />
      <rect x="0" y="57" width="1412" height="1" fill="#8f93c8" />
    </svg>
  );
}

const ticks = ["0.00e+00", "5.00e-01", "1.00e+00", "1.50e+00", "2.00e+00", "2.50e+00", "3.00e+00", "3.50e+00", "4.00e+00", "4.50e+00", "5.00e+00"];

function Graphics() {
  return (
    <div className="h-[618px] w-[1484px] bg-[linear-gradient(#cad2e3_0px,#e2e6ef_310px,#e9ecf5_390px,#f6f7fa_500px,#ffffff_605px)] font-['Liberation_Sans',sans-serif] text-[12px] text-black">
      <div className="flex h-7 items-center pr-[9px] pl-[5px] font-['DejaVu_Sans_Condensed','DejaVu_Sans',sans-serif] text-[12.5px] font-bold text-[#1a222c]">
        <Feather c="size-4 mb-1" />
        <div className="flex flex-1 justify-center pl-px">
          <T w={188}>Contours of X Velocity [m/s]</T>
        </div>
        <svg viewBox="0 0 12 12" className="size-3" stroke="#222" strokeWidth="2.2">
          <path d="M1.500 1.500l9 9M10.500 1.500l-9 9" />
        </svg>
      </div>
      <div className="h-[255px]" />
      <ContourPlot />
      <div className="mt-[189px] ml-[306px] flex flex-col items-start leading-[14px]">
        <T w={91}>X Velocity [ m/s ]</T>
        <T w={52}>contour-1</T>
      </div>
      <div className="mt-2 ml-[310px] flex w-[872px] leading-[14px]">
        {ticks.map((t) => (
          <div key={t} className="flex flex-1 justify-center">
            <T w={55}>{t}</T>
          </div>
        ))}
      </div>
      <svg viewBox="0 0 795 18" className="mt-[3px] ml-[349px] block h-[18px] w-[795px]">
        <defs>
          <linearGradient id="legend">
            <stop offset="0" stopColor="#0000ff" />
            <stop offset=".1" stopColor="#3058f4" />
            <stop offset=".2" stopColor="#3fa0ff" />
            <stop offset=".3" stopColor="#18dccb" />
            <stop offset=".35" stopColor="#20eab0" />
            <stop offset=".4" stopColor="#4efa86" />
            <stop offset=".5" stopColor="#a0ff40" />
            <stop offset=".6" stopColor="#e2d838" />
            <stop offset=".7" stopColor="#ffa433" />
            <stop offset=".8" stopColor="#ee5512" />
            <stop offset=".87" stopColor="#d83008" />
            <stop offset="1" stopColor="#c00000" />
          </linearGradient>
        </defs>
        <rect x=".5" y="2.5" width="793" height="14.5" fill="url(#legend)" stroke="#2b2b3a" />
        <path d={ticks.map((_, i) => `M${0.5 + i * 79.3} 0v3`).join("")} stroke="#111" />
      </svg>
    </div>
  );
}

/* ---------- Console ---------- */
const lines = [
  'Reading from LAPTOP-57O9LBH0:"D:\\NITCMECHSEM7\\Computational Fluid Dynamics\\CFD assignment\\q2distributary\\q2contin_files\\dp0\\FFF\\Fluent\\FFF-1-00100.dat.h5" in NODE0 mode ...',
  "",
  "",
  "  Reading results.",
  "Parallel variables...",
  "Done.",
  "",
  "Enabling Lighting so that contour lines are visible.",
];

function Console() {
  return (
    <div className="flex h-[174px] flex-col bg-[#bfc4cd] pl-0.5">
      <div className="flex h-[27px] shrink-0 items-center pt-0.5 pr-[3px] pl-1.5 font-bold text-[#5f7390]">
        <T w={51}>Console</T>
        <svg viewBox="0 0 24 12" className="mb-1 ml-auto h-3 w-6" fill="none" stroke="#555">
          <rect x=".5" y="1" width="10" height="10" rx="2" />
          <path d="M3 5h4v4H3zM5 5V3h4v4H7" />
          <path d="M22 2l-4.500 4 4.500 4" stroke="#222" strokeWidth="1.6" />
        </svg>
      </div>
      <div className="flex h-[141px] rounded-bl-[3px] bg-[#f7f7f7]">
        <div className="w-[1492px] shrink-0 overflow-hidden pl-1.5 font-['Liberation_Mono',monospace] text-[13.3px] leading-4 whitespace-pre text-[#111]">
          <div className="-mt-[2px]">
            {lines.map((l, i) => (
              <div key={i} className="h-4">{l && <T w={l.length * 8}>{l}</T>}</div>
            ))}
          </div>
        </div>
        <div className="ml-[-1px] flex h-6 w-[61px] shrink-0 gap-[5px]">
          <div className="flex w-7 items-center justify-center rounded-[3px] border border-[#b0b0b0] bg-[#fafafa]">
            <svg viewBox="0 0 16 16" className="size-4" fill="none">
              <path d="M8 2l6.500 12h-13z" stroke="#e0b560" strokeWidth="1.3" />
              <path d="M8 6v4.500M8 11.500v1.500" stroke="#777" strokeWidth="1.8" />
            </svg>
          </div>
          <div className="flex w-7 items-center justify-center rounded-[3px] border border-[#b0b0b0] bg-[#fafafa]">
            <svg viewBox="0 0 16 16" className="size-4" fill="none">
              <circle cx="8" cy="8" r="6.7" stroke="#777" strokeWidth="1.2" />
              <path d="M8 4v5M8 10.500V12" stroke="#e0b560" strokeWidth="1.7" />
            </svg>
          </div>
        </div>
        <div className="flex w-[15px] shrink-0 flex-col bg-[#c1c8cf]">
          <div className="flex h-5 items-center justify-center bg-[#9caab3]">
            <svg viewBox="0 0 8 5" className="h-[5px] w-2"><path d="M0 5h8L4 0z" fill="#5a6475" /></svg>
          </div>
          <div className="mt-[66px] h-5 bg-[#5c6275]" />
          <div className="flex h-5 items-center justify-center bg-[#9caab3]">
            <svg viewBox="0 0 8 5" className="h-[5px] w-2"><path d="M0 0h8L4 5z" fill="#5a6475" /></svg>
          </div>
          <div className="flex flex-1 items-center justify-end bg-[#f7f7f7]">
            <svg viewBox="0 0 14 14" className="size-3.5">
              <rect x=".5" y=".5" width="13" height="13" fill="#fff" stroke="#aaa" />
              <path d="M3 7l3 4 5.500-8" fill="none" stroke="#111" strokeWidth="2.3" />
            </svg>
          </div>
        </div>
      </div>
    </div>
  );
}

/* ---------- Taskbar ---------- */
const Chrome = ({ badge }: { badge?: boolean }) => (
  <svg viewBox="0 0 24 24" className="size-6 overflow-visible">
    <circle cx="12" cy="12" r="12" fill="#fbc116" />
    <path d="M1.600 6A12 12 0 0 1 22.400 6H12L6.800 15z" fill="#e33b2e" />
    <path d="M1.600 6l5.200 9L12 18l-.5 6A12 12 0 0 1 1.600 6z" fill="#2ba24c" />
    <path d="M6.800 15L12 18h5.200L12 24h-1.500z" fill="#2ba24c" />
    <path d="M17.200 15L12 24A12 12 0 0 0 22.400 6H12z" fill="#fbc116" />
    <circle cx="12" cy="12" r="6" fill="#fff" />
    <circle cx="12" cy="12" r="4.7" fill="#3a78e8" />
    {badge && (
      <g>
        <circle cx="21" cy="3.5" r="8" fill="#7fb2e8" />
        <path d="M13.200 5h15.600a8 8 0 0 1-15.600 0z" fill="#53822f" />
        <path d="M15 2q4-5 8-1t5 0" stroke="#e8f1fb" strokeWidth="1.4" fill="none" />
      </g>
    )}
  </svg>
);
const apps: [React.ReactNode, number][] = [
  [
    <svg viewBox="0 0 24 24" className="size-6">
      <defs>
        <linearGradient id="win" gradientUnits="userSpaceOnUse" x1="0" y1="0" x2="24" y2="24">
          <stop offset="0" stopColor="#8fe0ff" />
          <stop offset="1" stopColor="#0a91f5" />
        </linearGradient>
      </defs>
      <path d="M.5.5h11v11H.5zM12.500.5h11v11h-11zM.5 12.500h11v11H.5zM12.500 12.500h11v11h-11z" fill="url(#win)" />
    </svg>,
    0,
  ],
  [
    <svg viewBox="0 0 24 24" className="size-6">
      <defs>
        <linearGradient id="edge" x2="1" y2=".3">
          <stop offset="0" stopColor="#2aa6dc" />
          <stop offset=".6" stopColor="#37c3c0" />
          <stop offset="1" stopColor="#5bd95c" />
        </linearGradient>
      </defs>
      <circle cx="12" cy="12" r="12" fill="#1467b8" />
      <path d="M0 11C1 4 6 0 12 0c7 0 12 5 12 10 0 4-3 6-6 6s-4-1-3-3c1-3-1-5-4-5-5-1-9 0-11 3z" fill="url(#edge)" />
      <path d="M15 15c2 4 6 4 7.500 3L24 12c-1 3-4 4-6 4s-3-1-3-1z" fill="#1c1c1c" />
      <path d="M8 8C3 11 4 20 12 24 4 24-1 18 0 11c2-3 5-4 8-3z" fill="#1a86d6" />
    </svg>,
    0,
  ],
  [<Chrome />, 0],
  [
    <svg viewBox="0 0 24 24" className="size-6">
      <path d="M0 3a1.500 1.500 0 0 1 1.500-1.500H8L10.500 4H24v5H0z" fill="#e0a008" />
      <path d="M0 7h10l2-2.500h10.500A1.500 1.500 0 0 1 24 6v16.500H0z" fill="#ffce45" />
      <path d="M4.500 22.500V18a2 2 0 0 1 2-2h11a2 2 0 0 1 2 2v4.500z" fill="#1179cc" />
      <path d="M8 19.500h8" stroke="#0a5a9e" strokeWidth="1.5" />
    </svg>,
    1,
  ],
  [
    <svg viewBox="0 0 24 24" className="size-6">
      <defs>
        <linearGradient id="ff" x1=".8" y1="0" x2=".3" y2="1">
          <stop offset="0" stopColor="#ffe23c" />
          <stop offset=".5" stopColor="#ff7a2a" />
          <stop offset="1" stopColor="#f5266e" />
        </linearGradient>
      </defs>
      <path d="M3 4c1 0 2 1 3 2 2-1 4-1 6 0 1-3 3-5 5-6 0 3 6 6 6 13 0 6-5 10-11 10S1 19 1 13c0-4 1-6 2-9z" fill="url(#ff)" />
      <circle cx="12.5" cy="12" r="5" fill="#7b3fd6" />
      <path d="M4 9c3-1 5 0 8 0-1 2-3 2-4 4 1 3 5 4 8 2-1 4-9 5-11 0z" fill="#ff8a2a" />
    </svg>,
    0,
  ],
  [<WB c="size-6" />, 1],
  [
    <svg viewBox="0 0 24 24" className="size-6">
      <path d="M1 1h19v22H1z" fill="#f5f5f5" />
      <path d="M2.500 13h16v8.500h-16z" fill="#7cc62c" />
      <path d="M2.500 11h16v5h-16z" fill="#b5e070" />
      <path d="M3 3.500h14" stroke="#999" strokeWidth="1.5" strokeDasharray="1 1" />
      <path d="M5 7v8M8 7v6M11 10h2" stroke="#222" strokeWidth="1.6" />
      <path d="M21 1l1.500 1L15 19l-2 1 .5-2.500z" fill="#f0b02a" stroke="#a86b10" strokeWidth=".6" />
    </svg>,
    1,
  ],
  [<Chrome badge />, 1],
  [
    <svg viewBox="0 0 24 24" className="size-6">
      <rect width="24" height="24" rx="4" fill="#2e2e2e" />
      <path d="M6 19V6l12 12V5" fill="none" stroke="#8b8b8b" strokeWidth="2.4" />
    </svg>,
    1,
  ],
  [<Feather c="size-6" letter="F" />, 2],
];

function Taskbar() {
  return (
    <footer className="flex h-12 items-stretch border-t border-[#3a3a3a] bg-[#1c1c1c] pl-[741px] font-['Noto_Sans',sans-serif] text-[12px] text-[#f2f2f2]">
      {apps.map(([icon, state], i) => (
        <div key={i} className="w-11 p-[2px] pt-[3px]">
          <div className={"flex h-10 flex-col items-center rounded-[4px] border pt-[7px] " + (state === 2 ? "border-[#363636] bg-[#2a2a2a]" : "border-transparent")}>
            {icon}
            {state > 0 && <span className={"mt-1 h-[3px] shrink-0 rounded-full " + (state === 2 ? "w-4 bg-[#4cc2ff]" : "w-1.5 bg-[#9a9a9a]")} />}
          </div>
        </div>
      ))}
      <div className="ml-auto flex items-center pr-[19px] pb-px">
        <ChevronUp className="size-4" strokeWidth={2} />
        <Volume2 className="ml-[14px] size-[18px]" strokeWidth={1.5} />
        <div className="ml-[15px] flex w-[28px] flex-col items-center leading-4">
          <T w={23}>ENG</T>
          <T w={12}>IN</T>
        </div>
        <Wifi className="ml-[14px] size-[18px]" strokeWidth={2} />
        <Volume2 className="ml-[7px] size-[18px]" strokeWidth={1.5} />
        <svg viewBox="0 0 18 14" className="ml-[6px] h-3.5 w-[18px]" fill="none">
          <rect x="2.5" y="4" width="12" height="7.5" rx="1.5" stroke="#fff" />
          <rect x="5" y="5.5" width="8" height="4.5" fill="#fff" />
          <path d="M16.500 6v3.500" stroke="#fff" strokeWidth="1.5" />
          <path d="M4 0L1 5h2.500L2.500 9 6 4H3.500z" fill="#fff" stroke="#1c1c1c" strokeWidth=".7" />
        </svg>
        <div className="ml-[15px] flex w-[63px] flex-col items-end leading-4">
          <T w={29}>15:42</T>
          <T w={63}>30-09-2023</T>
        </div>
        <svg viewBox="0 0 16 18" className="ml-[7px] h-[18px] w-4">
          <path d="M8 1a5 5 0 0 1 5 5v4.500l2 3.500H1l2-3.500V6a5 5 0 0 1 5-5zM5.500 15.200h5a2.500 2.200 0 0 1-5 0z" fill="#8fe3ff" />
        </svg>
      </div>
    </footer>
  );
}

export default function App() {
  return (
    <div className="flex h-[1080px] w-[1920px] flex-col overflow-hidden bg-white font-['DejaVu_Sans_Condensed','DejaVu_Sans',sans-serif] text-[12.5px] leading-4">
      <TopBars />
      <Ribbon />
      <main className="mt-[3px] flex h-[820px]">
        <Outline />
        <TaskPage />
        <div className="flex w-[1573px] flex-col">
          <div className="flex h-[618px]">
            <div className="flex w-12 shrink-0 flex-col pl-[9px]">
              <Strip c="" names={["", "sphere", "cube", "", "cursor", "rotate", "pan", "zoomPM", "zoom", "info", "", "zoomBox", "zoomL", "zoomR", "axes", "lock"]} />
            </div>
            <Graphics />
            <Strip
              c="w-[41px] shrink-0 pl-1.5"
              names={["", "mirror", "shadow", "trans", "", "eye", "eyeOff", "layers", "undoBox", "", "copy", "camera", "", "axes2", "bar", "textbox", "door"]}
            />
          </div>
          <div className="flex h-7 items-center pr-1 text-black">
            <svg viewBox="0 0 5 17" className="mb-3 ml-2 h-[17px] w-[5px]" stroke="#b9b9b9" strokeDasharray="1 2">
              <path d="M.5 0v17M4.500 0v17" />
            </svg>
            <div className="ml-auto flex items-center gap-0.5 pb-2">
              <T w={58}>0 selected</T>
              <div className="flex h-[23px] w-[168px] items-center justify-between rounded-[4px] border border-[#b3c0d4] bg-white pr-2 pl-[5px]">
                <T w={13}>all</T>
                <Arrow />
              </div>
            </div>
          </div>
          <div className="pl-[3px]">
            <Console />
          </div>
        </div>
      </main>
      <Taskbar />
    </div>
  );
}
